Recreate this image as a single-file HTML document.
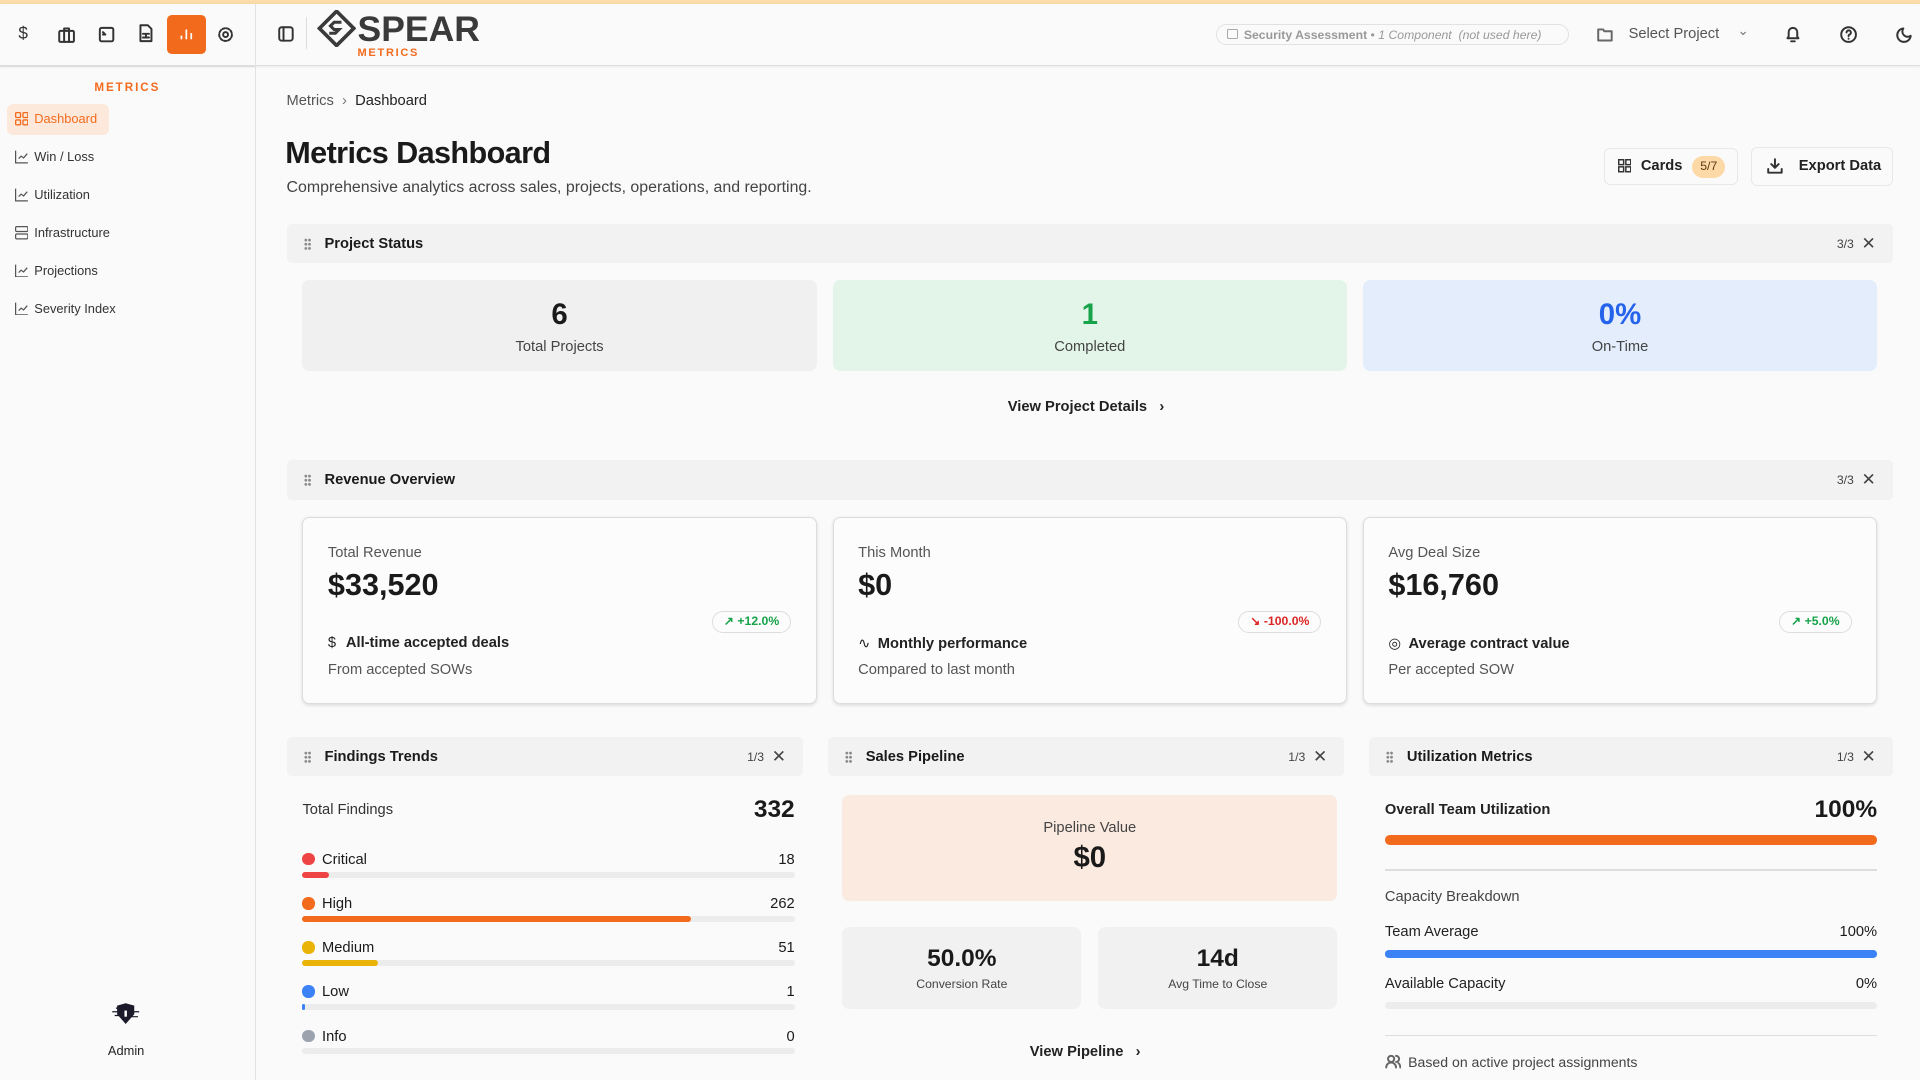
<!DOCTYPE html>
<html><head><meta charset="utf-8"><style>
*{box-sizing:border-box;margin:0;padding:0}
html,body{width:1920px;height:1080px;overflow:hidden;background:#fafafa}
#r{zoom:1.22449;width:1568px;height:882px;position:relative;font-family:"Liberation Sans",sans-serif;color:#1a1a1a;background:#fafafa}
.a{position:absolute}
.ic{stroke:#333;fill:none;stroke-width:1.6;stroke-linecap:round;stroke-linejoin:round}
.nav{position:absolute;left:12px;font-size:10.5px;color:#333;display:flex;align-items:center;gap:5px}
.sh{position:absolute;height:32px;background:#f2f2f2;border-radius:4px;font-size:12px;font-weight:bold;display:flex;align-items:center}
.sh .t{position:absolute;left:31px}
.sh .d{position:absolute;left:14px;top:11px;width:6px;height:10px;background:radial-gradient(circle,#888 1px,transparent 1.3px) 0 0/3px 3.4px}
.sh .n{position:absolute;right:32px;font-size:10px;font-weight:normal;color:#444}
.sh .x{position:absolute;right:14px;font-size:14px;font-weight:normal;color:#444}
.st{position:absolute;top:229px;height:74px;width:420px;border-radius:6px;text-align:center}
.st b{display:block;font-size:24px;margin-top:14px}
.st span{font-size:12px;color:#444;display:block;margin-top:6px}
.rc{position:absolute;top:422px;width:420px;height:153px;background:#fcfcfc;border:1px solid #ddd;border-radius:6px;box-shadow:0 1px 3px rgba(0,0,0,.12)}
.rc .l{position:absolute;left:20px;top:22px;font-size:12px;color:#555}
.rc .v{position:absolute;left:20px;top:41px;font-size:25px;font-weight:bold}
.rc .p{position:absolute;right:20px;top:76px;height:18px;border:1px solid #ddd;border-radius:9px;font-size:10px;font-weight:bold;padding:2px 9px}
.rc .s{position:absolute;left:20px;top:96px;font-size:12px;font-weight:bold;color:#222}
.rc .f{position:absolute;left:20px;top:118px;font-size:12px;color:#555}
.fr{position:absolute;left:247px;width:402px;font-size:12px}
.fr .dt{display:inline-block;width:10px;height:10px;border-radius:50%;vertical-align:-1px;margin-right:6px}
.fr .c{position:absolute;right:0;top:0}
.fr .bg{position:absolute;left:0;top:16px;width:402px;height:5px;border-radius:3px;background:#ececec}
.fr .bg i{display:block;height:5px;border-radius:3px}
</style></head><body><div id="r">
<div class="a" style="left:0;top:0;width:1568px;height:3px;background:#fcdcaa"></div>
<div class="a" style="left:0;top:3px;width:1568px;height:51px;background:#fafafa;border-bottom:1px solid #ddd;box-shadow:0 1px 3px rgba(0,0,0,.08)"></div>
<div class="a" style="left:208px;top:3px;width:1px;height:879px;background:#e2e2e2"></div>
<div class="a" style="left:0;top:54px;width:208px;height:1px;background:#ddd"></div>
<!-- top icons -->
<div class="a" style="left:15px;top:19px;font-size:14px;color:#333">$</div>
<svg class="a ic" style="left:47px;top:21px" width="14" height="14" viewBox="0 0 14 14"><rect x="1" y="4" width="12" height="9" rx="1"/><path d="M5 4V2h4v2M5 4v9M9 4v9"/></svg>
<svg class="a ic" style="left:80px;top:21px" width="14" height="14" viewBox="0 0 14 14"><rect x="1.5" y="1.5" width="11" height="11" rx="1.5"/><path d="M4 5l2 2H4"/></svg>
<svg class="a ic" style="left:113px;top:20px" width="13" height="15" viewBox="0 0 13 15"><path d="M2 1h6l3 3v10H2z"/><path d="M4 8h5M4 11h5M6.5 8v3"/></svg>
<div class="a" style="left:136px;top:12px;width:32px;height:32px;background:#f26b1d;border-radius:4px"></div>
<svg class="a" style="left:146px;top:22px" width="12" height="12" viewBox="0 0 12 12"><path d="M2 10V7M6 10V2M10 10V5" stroke="#fff" stroke-width="1.4"/></svg>
<svg class="a ic" style="left:177px;top:21px" width="14" height="14" viewBox="0 0 14 14"><circle cx="7" cy="7" r="2"/><circle cx="7" cy="7" r="5.2" stroke-dasharray="2.2 1.4"/></svg>
<svg class="a ic" style="left:227px;top:21px" width="13" height="13" viewBox="0 0 13 13"><rect x="1" y="1" width="11" height="11" rx="2"/><path d="M4.5 1v11"/></svg>
<div class="a" style="left:250px;top:14px;width:1px;height:26px;background:#ddd"></div>
<svg class="a" style="left:259px;top:8px" width="32" height="30" viewBox="0 0 32 30"><path d="M16 1L30 15 16 29 2 15z" fill="none" stroke="#3a3a3a" stroke-width="3"/><path d="M20 10h-6l-3 3 3 3h4l-3 3h-5" fill="none" stroke="#3a3a3a" stroke-width="2.5"/></svg>
<div class="a" style="left:292px;top:7px;font-size:29px;font-weight:bold;color:#3a3a3a;letter-spacing:0px">SPEAR</div>
<div class="a" style="left:292px;top:38px;font-size:9px;font-weight:bold;color:#f26b1d;letter-spacing:1.4px">METRICS</div>
<!-- right header -->
<div class="a" style="left:993px;top:20px;width:288px;height:17px;border:1px solid #e2e2e2;border-radius:9px;font-size:10px;color:#999;padding:2px 0 0 22px;white-space:nowrap"><span style="font-weight:bold">Security Assessment</span> • <i>1 Component &nbsp;(not used here)</i></div>
<div class="a" style="left:1002px;top:24px;width:9px;height:8px;border:1px solid #aaa;border-radius:1px"></div>
<svg class="a ic" style="left:1304px;top:22px;stroke:#666" width="13" height="12" viewBox="0 0 13 12"><path d="M1 2h4l1 1.5h6V11H1z"/></svg>
<div class="a" style="left:1330px;top:21px;font-size:12px;color:#555">Select Project</div>
<div class="a" style="left:1419px;top:19px;font-size:11px;color:#777">⌄</div>
<svg class="a ic" style="left:1458px;top:21px" width="13" height="14" viewBox="0 0 13 14"><path d="M2 10h9L10 8.5V5a3.5 3.5 0 0 0-7 0v3.5z M5 12.5h3"/></svg>
<svg class="a ic" style="left:1503px;top:21px" width="14" height="14" viewBox="0 0 14 14"><circle cx="7" cy="7" r="6"/><path d="M5.3 5.3a1.8 1.8 0 1 1 2.3 1.8c-.5.2-.6.6-.6 1.2M7 10.3v.1"/></svg>
<svg class="a ic" style="left:1548px;top:21px" width="14" height="14" viewBox="0 0 14 14"><path d="M12 8A5.5 5.5 0 1 1 6 2a4.3 4.3 0 0 0 6 6z"/></svg>
<!-- sidebar -->
<div class="a" style="left:0;width:208px;top:66px;text-align:center;font-size:9.5px;font-weight:bold;color:#f26b1d;letter-spacing:1.6px">METRICS</div>
<div class="a" style="left:6px;top:85px;width:83px;height:25px;background:#fde9dc;border-radius:5px"></div>
<div class="nav" style="top:91px;color:#f26b1d"><svg width="11" height="11" viewBox="0 0 11 11" fill="none" stroke="#f26b1d" stroke-width="1.1"><rect x=".5" y=".5" width="4" height="4" rx=".8"/><rect x="6.5" y=".5" width="4" height="4" rx=".8"/><rect x=".5" y="6.5" width="4" height="4" rx=".8"/><rect x="6.5" y="6.5" width="4" height="4" rx=".8"/></svg>Dashboard</div>
<div class="nav" style="top:122px"><svg width="11" height="11" viewBox="0 0 11 11" fill="none" stroke="#555" stroke-width="1"><path d="M.5 .5v10h10M3 7l2-2 2 1.5 3-3.5"/></svg>Win / Loss</div>
<div class="nav" style="top:153px"><svg width="11" height="11" viewBox="0 0 11 11" fill="none" stroke="#555" stroke-width="1"><path d="M.5 .5v10h10M3 7l2-2 2 1.5 3-3.5"/></svg>Utilization</div>
<div class="nav" style="top:184px"><svg width="11" height="11" viewBox="0 0 11 11" fill="none" stroke="#555" stroke-width="1"><rect x=".5" y=".5" width="10" height="4" rx="1"/><rect x=".5" y="6.5" width="10" height="4" rx="1"/></svg>Infrastructure</div>
<div class="nav" style="top:215px"><svg width="11" height="11" viewBox="0 0 11 11" fill="none" stroke="#555" stroke-width="1"><path d="M.5 .5v10h10M3 7l2-2 2 1.5 3-3.5"/></svg>Projections</div>
<div class="nav" style="top:246px"><svg width="11" height="11" viewBox="0 0 11 11" fill="none" stroke="#555" stroke-width="1"><path d="M.5 .5v10h10M3 7l2-2 2 1.5 3-3.5"/></svg>Severity Index</div>
<svg class="a" style="left:91px;top:818px" width="24" height="20" viewBox="0 0 24 20"><path d="M5 3l7-2 7 2v7l-7 8-7-8z" fill="#1a1a2a"/><path d="M1 8h7M16 8h7M3 11h5M16 12h6M4 5h4" stroke="#1a1a2a" stroke-width="1"/><rect x="11" y="7" width="2" height="5" fill="#fff"/></svg>
<div class="a" style="left:0;width:206px;top:852px;text-align:center;font-size:10.5px;color:#222">Admin</div>
<!-- main -->
<div class="a" style="left:234px;top:76px;font-size:12px;color:#555">Metrics &nbsp;<span style="color:#777">›</span>&nbsp; <span style="color:#222">Dashboard</span></div>
<div class="a" style="left:233px;top:111px;font-size:25px;font-weight:bold;letter-spacing:-.5px">Metrics Dashboard</div>
<div class="a" style="left:234px;top:146px;font-size:13px;color:#444">Comprehensive analytics across sales, projects, operations, and reporting.</div>
<div class="a" style="left:1310px;top:121px;width:109px;height:30px;border:1px solid #e8e8e8;border-radius:5px;background:#fafafa"></div>
<svg class="a" style="left:1321px;top:130px" width="11" height="11" viewBox="0 0 11 11" fill="none" stroke="#333" stroke-width="1.2"><rect x=".6" y=".6" width="4" height="4"/><rect x="6.4" y=".6" width="4" height="4"/><rect x=".6" y="6.4" width="4" height="4"/><rect x="6.4" y="6.4" width="4" height="4"/></svg>
<div class="a" style="left:1340px;top:129px;font-size:12px;font-weight:bold;color:#222">Cards</div>
<div class="a" style="left:1382px;top:127px;width:27px;height:18px;background:#fdd9a8;border-radius:9px;font-size:10px;text-align:center;padding-top:3px;color:#5a3a10">5/7</div>
<div class="a" style="left:1430px;top:120px;width:116px;height:32px;border:1px solid #e8e8e8;border-radius:5px;background:#fafafa"></div>
<svg class="a ic" style="left:1443px;top:129px" width="13" height="13" viewBox="0 0 13 13"><path d="M6.5 1v7M3.5 5l3 3 3-3M1 9v3h11V9"/></svg>
<div class="a" style="left:1469px;top:129px;font-size:12px;font-weight:bold;color:#222">Export Data</div>

<div class="sh" style="left:234px;top:183px;width:1312px"><i class="d"></i><span class="t">Project Status</span><span class="n">3/3</span><span class="x">✕</span></div>
<div class="st" style="left:247px;background:#f0f0f0"><b>6</b><span>Total Projects</span></div>
<div class="st" style="left:680px;background:#e2f5e8"><b style="color:#16a34a">1</b><span>Completed</span></div>
<div class="st" style="left:1113px;background:#e3edfb"><b style="color:#2563eb">0%</b><span>On-Time</span></div>
<div class="a" style="left:823px;top:326px;font-size:12px;font-weight:bold;color:#222">View Project Details &nbsp;&nbsp;›</div>

<div class="sh" style="left:234px;top:376px;width:1312px"><i class="d"></i><span class="t">Revenue Overview</span><span class="n">3/3</span><span class="x">✕</span></div>
<div class="rc" style="left:247px"><div class="l">Total Revenue</div><div class="v">$33,520</div><div class="p" style="color:#16a34a">↗ +12.0%</div><div class="s"><span style="font-weight:normal;margin-right:8px">$</span>All-time accepted deals</div><div class="f">From accepted SOWs</div></div>
<div class="rc" style="left:680px"><div class="l">This Month</div><div class="v">$0</div><div class="p" style="color:#dc2626">↘ -100.0%</div><div class="s"><span style="font-weight:normal;margin-right:6px">∿</span>Monthly performance</div><div class="f">Compared to last month</div></div>
<div class="rc" style="left:1113px"><div class="l">Avg Deal Size</div><div class="v">$16,760</div><div class="p" style="color:#16a34a">↗ +5.0%</div><div class="s"><span style="font-weight:normal;margin-right:6px">◎</span>Average contract value</div><div class="f">Per accepted SOW</div></div>

<div class="sh" style="left:234px;top:602px;width:422px"><i class="d"></i><span class="t">Findings Trends</span><span class="n">1/3</span><span class="x">✕</span></div>
<div class="sh" style="left:676px;top:602px;width:422px"><i class="d"></i><span class="t">Sales Pipeline</span><span class="n">1/3</span><span class="x">✕</span></div>
<div class="sh" style="left:1118px;top:602px;width:428px"><i class="d"></i><span class="t">Utilization Metrics</span><span class="n">1/3</span><span class="x">✕</span></div>

<div class="a" style="left:247px;top:655px;font-size:12px;color:#333">Total Findings</div>
<div class="a" style="left:560px;top:650px;width:89px;text-align:right;font-size:20px;font-weight:bold">332</div>
<div class="fr" style="top:696px"><i class="dt" style="background:#ef4444"></i>Critical<span class="c">18</span><div class="bg"><i style="width:22px;background:#ef4444"></i></div></div>
<div class="fr" style="top:732px"><i class="dt" style="background:#f26b1d"></i>High<span class="c">262</span><div class="bg"><i style="width:317px;background:#f26b1d"></i></div></div>
<div class="fr" style="top:768px"><i class="dt" style="background:#eab308"></i>Medium<span class="c">51</span><div class="bg"><i style="width:62px;background:#eab308"></i></div></div>
<div class="fr" style="top:804px"><i class="dt" style="background:#3b82f6"></i>Low<span class="c">1</span><div class="bg"><i style="width:2px;background:#3b82f6"></i></div></div>
<div class="fr" style="top:840px"><i class="dt" style="background:#9ca3af"></i>Info<span class="c">0</span><div class="bg"></div></div>

<div class="a" style="left:688px;top:649px;width:404px;height:87px;background:#fbeae0;border-radius:6px;text-align:center"><div style="font-size:12px;color:#444;margin-top:21px">Pipeline Value</div><div style="font-size:24px;font-weight:bold;margin-top:4px">$0</div></div>
<div class="a" style="left:688px;top:757px;width:195px;height:67px;background:#f1f1f1;border-radius:6px;text-align:center"><div style="font-size:20px;font-weight:bold;margin-top:15px">50.0%</div><div style="font-size:10px;color:#444;margin-top:3px">Conversion Rate</div></div>
<div class="a" style="left:897px;top:757px;width:195px;height:67px;background:#f1f1f1;border-radius:6px;text-align:center"><div style="font-size:20px;font-weight:bold;margin-top:15px">14d</div><div style="font-size:10px;color:#444;margin-top:3px">Avg Time to Close</div></div>
<div class="a" style="left:841px;top:853px;font-size:12px;font-weight:bold;color:#222">View Pipeline &nbsp;&nbsp;›</div>

<div class="a" style="left:1131px;top:655px;font-size:12px;font-weight:bold;color:#222">Overall Team Utilization</div>
<div class="a" style="left:1433px;top:650px;width:100px;text-align:right;font-size:20px;font-weight:bold">100%</div>
<div class="a" style="left:1131px;top:682px;width:402px;height:8px;border-radius:4px;background:#f26b1d"></div>
<div class="a" style="left:1131px;top:710px;width:402px;height:1px;background:#ddd"></div>
<div class="a" style="left:1131px;top:726px;font-size:12px;color:#444">Capacity Breakdown</div>
<div class="a" style="left:1131px;top:755px;font-size:12px;color:#222">Team Average</div>
<div class="a" style="left:1433px;top:755px;width:100px;text-align:right;font-size:12px">100%</div>
<div class="a" style="left:1131px;top:776px;width:402px;height:6px;border-radius:3px;background:#3b82f6"></div>
<div class="a" style="left:1131px;top:797px;font-size:12px;color:#222">Available Capacity</div>
<div class="a" style="left:1433px;top:797px;width:100px;text-align:right;font-size:12px">0%</div>
<div class="a" style="left:1131px;top:818px;width:402px;height:6px;border-radius:3px;background:#ececec"></div>
<div class="a" style="left:1131px;top:845px;width:402px;height:1px;background:#ddd"></div>
<svg class="a ic" style="left:1131px;top:861px;stroke:#666" width="13" height="12" viewBox="0 0 13 12"><circle cx="5" cy="4" r="2.5"/><path d="M1 11c0-2.5 2-4 4-4s4 1.5 4 4M9 1.5a2.5 2.5 0 0 1 0 5M11 7.5c1 .7 1.5 2 1.5 3.5"/></svg>
<div class="a" style="left:1150px;top:861px;font-size:11.5px;color:#444">Based on active project assignments</div>
</div></body></html>
